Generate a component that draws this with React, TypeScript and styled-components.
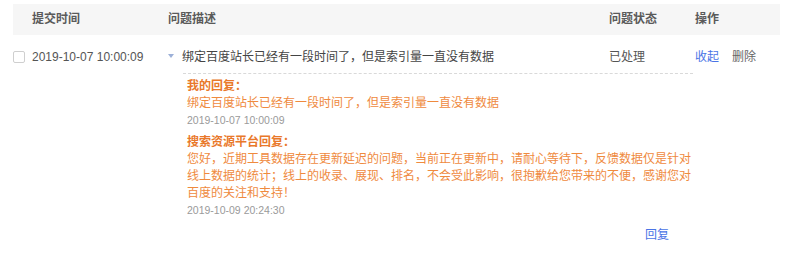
import React from "react";
import styled, { createGlobalStyle } from "styled-components";

const Global = createGlobalStyle`
  html, body { margin: 0; padding: 0; background: #fff; }
  body { font-family: "Liberation Sans", "Noto Sans CJK SC", sans-serif; }
`;

const COLS = "155px 441px 86px 85px";

const Table = styled.div`
  width: 767px;
  padding: 4px 0 0 13px;
`;

const Header = styled.div`
  display: grid;
  grid-template-columns: ${COLS};
  height: 31px;
  align-items: center;
  background: #f6f6f6;
`;

const HeadCell = styled.div<{ $pad?: number }>`
  padding-left: ${(p) => p.$pad ?? 0}px;
  font-size: 12px;
  font-weight: bold;
  color: #5a5a5a;
  line-height: 17px;
`;

const Row = styled.div`
  display: grid;
  grid-template-columns: ${COLS};
  padding-top: 13px;
  font-size: 12px;
  line-height: 18px;
  color: #555;
`;

const DateCell = styled.div`
  display: flex;
  align-items: center;
  gap: 7px;
`;

const Check = styled.span`
  width: 10px;
  height: 10px;
  border: 1px solid #cfcfcf;
  border-radius: 2px;
  background: #fff;
`;

const DescCell = styled.div`
  display: flex;
  align-items: center;
  gap: 8px;
  color: #444;
`;

const Caret = styled.span`
  width: 0;
  height: 0;
  border-left: 3.5px solid transparent;
  border-right: 3.5px solid transparent;
  border-top: 4px solid #9cb0d8;
  margin-top: -3px;
`;

const Ops = styled.div`
  display: flex;
  gap: 13px;
`;

const Link = styled.a<{ $muted?: boolean }>`
  color: ${(p) => (p.$muted ? "#666" : "#4a74e6")};
  text-decoration: none;
  cursor: pointer;
`;

const Detail = styled.div`
  grid-column: 2 / 4;
  margin: 7px 2px 0 15px;
  border-top: 1px dashed #d9d9d9;
  padding: 4px 0 0 4px;
`;

const Block = styled.div<{ $gap?: number }>`
  margin-top: ${(p) => p.$gap ?? 0}px;
  line-height: 17px;
  font-size: 12px;
`;

const Title = styled.div`
  font-weight: bold;
  color: #e9782a;
`;

const Body = styled.div`
  color: #ef8a3e;
  width: 505px;
`;

const Stamp = styled.div`
  color: #9a9a9a;
  font-size: 10.5px;
`;

const ReplyBar = styled.div`
  display: flex;
  justify-content: flex-end;
  padding-right: 24px;
  margin-top: 8px;
  font-size: 12px;
  line-height: 17px;
`;

export default function App() {
  return (
    <>
      <Global />
      <Table>
        <Header>
          <HeadCell $pad={19}>提交时间</HeadCell>
          <HeadCell>问题描述</HeadCell>
          <HeadCell>问题状态</HeadCell>
          <HeadCell>操作</HeadCell>
        </Header>
        <Row>
          <DateCell>
            <Check />
            <span>2019-10-07 10:00:09</span>
          </DateCell>
          <DescCell>
            <Caret />
            <span>绑定百度站长已经有一段时间了，但是索引量一直没有数据</span>
          </DescCell>
          <div>已处理</div>
          <Ops>
            <Link>收起</Link>
            <Link $muted>删除</Link>
          </Ops>
          <Detail>
            <Block>
              <Title>我的回复：</Title>
              <Body>绑定百度站长已经有一段时间了，但是索引量一直没有数据</Body>
              <Stamp>2019-10-07 10:00:09</Stamp>
            </Block>
            <Block $gap={5}>
              <Title>搜索资源平台回复：</Title>
              <Body>
                您好，近期工具数据存在更新延迟的问题，当前正在更新中，请耐心等待下，反馈数据仅是针对线上数据的统计；线上的收录、展现、排名，不会受此影响，很抱歉给您带来的不便，感谢您对百度的关注和支持！
              </Body>
              <Stamp>2019-10-09 20:24:30</Stamp>
            </Block>
            <ReplyBar>
              <Link>回复</Link>
            </ReplyBar>
          </Detail>
        </Row>
      </Table>
    </>
  );
}
